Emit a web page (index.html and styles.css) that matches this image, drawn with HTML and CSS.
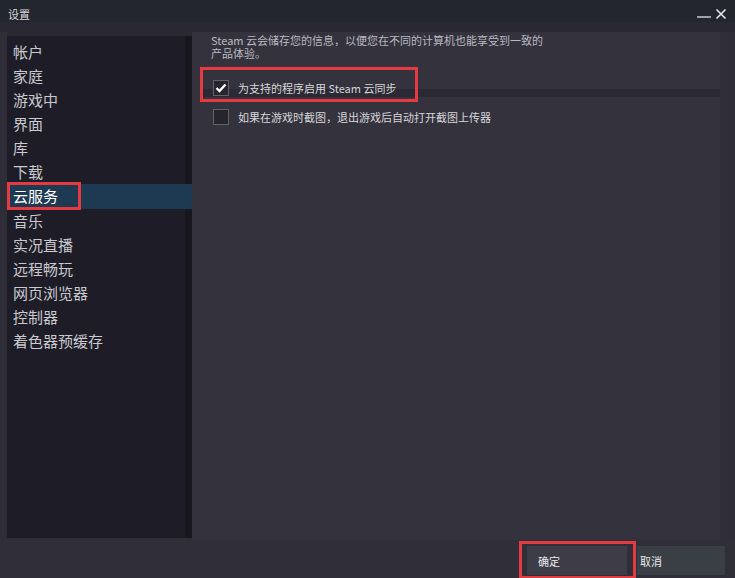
FILE: index.html
```html
<!DOCTYPE html>
<html lang="zh">
<head>
<meta charset="utf-8">
<title>设置</title>
<link rel="stylesheet" href="styles.css">
</head>
<body>
<div class="window">
  <div class="titlebar">
    <span class="title">设置</span>
    <div class="controls">
      <svg class="min" width="16" height="6" viewBox="0 0 16 6"><line x1="1" y1="3" x2="15" y2="3" stroke="#c8cad0" stroke-width="1.5"/></svg>
      <svg class="close" width="12" height="12" viewBox="0 0 12 12"><path d="M1.5 1.5 L10.5 10.5 M10.5 1.5 L1.5 10.5" stroke="#e4e6ea" stroke-width="1.6"/></svg>
    </div>
  </div>
  <div class="main">
    <nav class="sidebar">
      <div class="item">帐户</div>
      <div class="item">家庭</div>
      <div class="item">游戏中</div>
      <div class="item">界面</div>
      <div class="item">库</div>
      <div class="item">下载</div>
      <div class="item active">云服务</div>
      <div class="item">音乐</div>
      <div class="item">实况直播</div>
      <div class="item">远程畅玩</div>
      <div class="item">网页浏览器</div>
      <div class="item">控制器</div>
      <div class="item">着色器预缓存</div>
    </nav>
    <section class="content">
      <p class="desc">Steam 云会储存您的信息，以便您在不同的计算机也能享受到一致的<br>产品体验。</p>
      <div class="row first">
        <span class="check checked"><svg width="12" height="10" viewBox="0 0 12 10"><path d="M1.5 5 L4.5 8 L10.5 1.5" fill="none" stroke="#ffffff" stroke-width="2.4"/></svg></span>
        <span class="label">为支持的程序启用 Steam 云同步</span>
      </div>
      <div class="row second">
        <span class="check"></span>
        <span class="label">如果在游戏时截图，退出游戏后自动打开截图上传器</span>
      </div>
    </section>
    <div class="gutter"></div>
  </div>
  <div class="footer">
    <button class="btn ok">确定</button>
    <button class="btn cancel">取消</button>
  </div>
  <div class="mark mark-nav"></div>
  <div class="mark mark-check"></div>
  <div class="mark mark-btn"></div>
</div>
</body>
</html>
```
FILE: styles.css
```css
* { box-sizing: border-box; }
html, body { margin: 0; padding: 0; }
body {
  width: 735px;
  height: 578px;
  overflow: hidden;
  background: #2f2d38;
  font-family: "Noto Sans CJK SC", "Liberation Sans", sans-serif;
  color: #c8c8cc;
}
.window {
  position: relative;
  width: 735px;
  height: 578px;
  display: flex;
  flex-direction: column;
}
.titlebar {
  height: 22px;
  background: #23262e;
  display: flex;
  align-items: center;
  justify-content: space-between;
  padding: 0 8px 0 8px;
}
.title {
  font-size: 11px;
  color: #d8d8dc;
  line-height: 12px;
  margin-top: 6px;
}
.controls {
  display: flex;
  align-items: flex-start;
  gap: 3px;
  height: 22px;
}
.controls .min { margin-top: 14px; }
.controls .close { margin-top: 8px; }
.main {
  flex: 1;
  display: flex;
  padding: 10px 0 0 7px;
  background: linear-gradient(#2a2832 0 10px, #2f2d38 10px);
}
.sidebar {
  width: 185px;
  height: 506px;
  background: linear-gradient(to right, #1e1d27 0 178px, #18171f 178px);
  border-top: 4px solid #2a2933;
  padding-top: 4px;
}
.item {
  height: 24px;
  line-height: 24px;
  font-size: 15px;
  padding-left: 6px;
  color: #c9c9cf;
}
.item.active {
  background: #1d3a52;
  color: #ffffff;
  height: 25px;
}
.content {
  width: 528px;
  height: 508px;
  background: #34323d;
  padding: 2px 0 0 19px;
}
.gutter {
  width: 8px;
  height: 508px;
  background: #302e39;
}
.desc {
  margin: 0;
  font-size: 11px;
  line-height: 12.5px;
  color: #b9b9c0;
}
.row {
  display: flex;
  align-items: center;
  height: 18px;
  margin-left: 2px;
}
.row.first {
  margin-top: 20px;
  margin-left: -11px;
  padding-left: 13px;
  width: 520px;
  background: linear-gradient(transparent 0 10px, #2b2933 10px);
}
.row.second { margin-top: 11px; }
.check {
  width: 16px;
  height: 16px;
  border: 1px solid #62616b;
  background: #26252e;
  display: flex;
  align-items: center;
  justify-content: center;
  flex: none;
}
.label {
  margin-left: 9px;
  font-size: 11px;
  color: #d6d6da;
  line-height: 14px;
}
.footer {
  height: 38px;
  display: flex;
  justify-content: flex-end;
  align-items: flex-start;
  padding: 6px 10px 0 0;
  gap: 10px;
  background: #302e39;
}
.btn {
  border: none;
  height: 29px;
  font-family: "Noto Sans CJK SC", "Liberation Sans", sans-serif;
  font-size: 11px;
  color: #e8e8ec;
  text-align: left;
  padding: 0 0 0 11px;
}
.btn.ok { width: 100px; background: #3e3d47; }
.btn.cancel { width: 88px; background: #3a3e45; padding-left: 3px; }
.mark {
  position: absolute;
  border: 3px solid #e53a40;
  pointer-events: none;
}
.mark-nav { left: 7px; top: 182px; width: 74px; height: 28px; }
.mark-check { left: 200px; top: 67px; width: 218px; height: 35px; }
.mark-btn { left: 519px; top: 541px; width: 117px; height: 38px; }
```
